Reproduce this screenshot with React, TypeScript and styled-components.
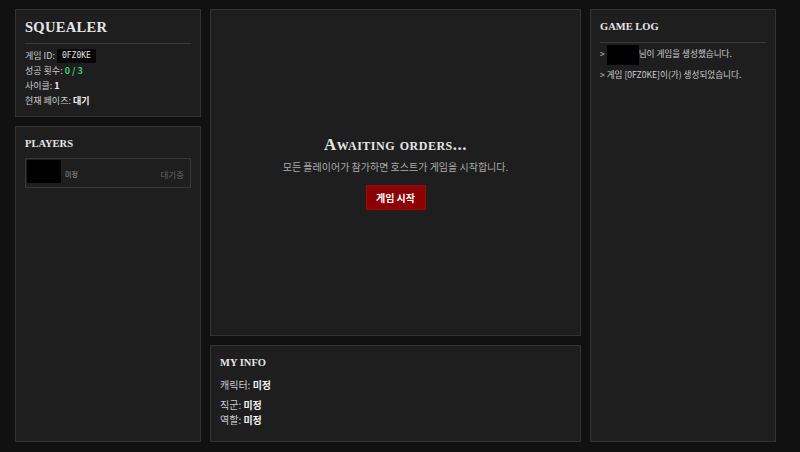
import React from "react";
import styled, { createGlobalStyle } from "styled-components";

const GlobalStyle = createGlobalStyle`
  html, body {
    margin: 0;
    padding: 0;
    background: #111111;
  }
  body {
    font-family: "Noto Sans CJK KR", "Noto Sans", sans-serif;
    color: #d0d0d0;
  }
`;

const App = () => {
  return (
    <>
      <GlobalStyle />
      <Root>
        <Column>
          <Panel>
            <Title>SQUEALER</Title>
            <Divider below={4} />
            <InfoLine>
              게임 ID:&nbsp;<Code>0FZ0KE</Code>
            </InfoLine>
            <InfoLine>
              성공 횟수:&nbsp;<Value color="#3ecf6e">0 / 3</Value>
            </InfoLine>
            <InfoLine>
              사이클:&nbsp;<Value>1</Value>
            </InfoLine>
            <InfoLine>
              현재 페이즈:&nbsp;<Value>대기</Value>
            </InfoLine>
          </Panel>
          <Panel grow>
            <SubTitle>PLAYERS</SubTitle>
            <PlayerRow>
              <Redacted width={34} height={23} />
              <PlayerName>미정</PlayerName>
              <PlayerStatus>대기중</PlayerStatus>
            </PlayerRow>
          </Panel>
        </Column>

        <Column>
          <Stage grow>
            <StageTitle>Awaiting orders...</StageTitle>
            <StageText>모든 플레이어가 참가하면 호스트가 게임을 시작합니다.</StageText>
            <StartButton>게임 시작</StartButton>
          </Stage>
          <InfoPanel>
            <SubTitle>MY INFO</SubTitle>
            <MyInfoLine gap={5}>
              캐릭터: <Value>미정</Value>
            </MyInfoLine>
            <MyInfoLine>
              직군: <Value>미정</Value>
            </MyInfoLine>
            <MyInfoLine>
              역할: <Value>미정</Value>
            </MyInfoLine>
          </InfoPanel>
        </Column>

        <Column>
          <Panel grow>
            <SubTitle>GAME LOG</SubTitle>
            <Divider below={1} />
            <LogLine>
              &gt; <Redacted width={32} height={20} />님이 게임을 생성했습니다.
            </LogLine>
            <LogLine>&gt; 게임 [0FZ0KE]이(가) 생성되었습니다.</LogLine>
          </Panel>
        </Column>
      </Root>
    </>
  );
};

export default App;

const Root = styled.div`
  display: grid;
  grid-template-columns: 186px 1fr 186px;
  gap: 9px;
  height: 452px;
  box-sizing: border-box;
  padding: 9px 24px 10px 15px;
`;

const Column = styled.div`
  display: flex;
  flex-direction: column;
  gap: 9px;
  min-height: 0;
`;

const Panel = styled.div<{ grow?: boolean }>`
  background: #1e1e1e;
  border: 1px solid #333333;
  box-sizing: border-box;
  padding: 8px 9px;
  flex: ${(p) => (p.grow ? "1" : "none")};
`;

const Stage = styled(Panel)`
  display: flex;
  flex-direction: column;
  align-items: center;
  justify-content: center;
`;

const InfoPanel = styled(Panel)`
  height: 97px;
`;

const Title = styled.div`
  font-family: "Liberation Serif", "DejaVu Serif", serif;
  font-weight: bold;
  font-size: 14.5px;
  letter-spacing: 0.3px;
  color: #e6e6e6;
  line-height: 18px;
`;

const SubTitle = styled.div`
  font-family: "Liberation Serif", "DejaVu Serif", serif;
  font-weight: bold;
  font-size: 10.5px;
  color: #e6e6e6;
  line-height: 16px;
  margin: 1px 0 6px;
`;

const Divider = styled.div<{ below: number }>`
  height: 1px;
  background: #3a3a3a;
  margin-top: 7px;
  margin-bottom: ${(p) => p.below}px;
`;

const InfoLine = styled.div`
  font-size: 9px;
  height: 15px;
  color: #cccccc;
  display: flex;
  align-items: center;
  white-space: pre;
`;

const Value = styled.span<{ color?: string }>`
  font-weight: bold;
  color: ${(p) => p.color || "#f2f2f2"};
`;

const Code = styled.span`
  font-family: "DejaVu Sans Mono", "Liberation Mono", monospace;
  font-size: 8px;
  background: #050505;
  color: #e0e0e0;
  padding: 2px 5px;
  line-height: 10px;
`;

const PlayerRow = styled.div`
  display: flex;
  align-items: center;
  border: 1px solid #383838;
  padding: 1px 6px 4px 1px;
`;

const Redacted = styled.span<{ width: number; height: number }>`
  display: inline-block;
  width: ${(p) => p.width}px;
  height: ${(p) => p.height}px;
  background: #000000;
  vertical-align: middle;
`;

const PlayerName = styled.span`
  font-size: 7px;
  color: #999999;
  margin-left: 4px;
  margin-top: 4px;
  flex: 1;
`;

const PlayerStatus = styled.span`
  font-size: 8.5px;
  color: #666666;
  margin-top: 4px;
`;

const StageTitle = styled.div`
  font-family: "Liberation Serif", "DejaVu Serif", serif;
  font-weight: bold;
  font-variant: small-caps;
  font-size: 17px;
  letter-spacing: 0.5px;
  color: #e6e6e6;
  line-height: 18px;
`;

const StageText = styled.div`
  font-size: 10px;
  color: #aaaaaa;
  margin-top: 6px;
  line-height: 14px;
`;

const StartButton = styled.button`
  margin-top: 11px;
  width: 60px;
  height: 25px;
  box-sizing: border-box;
  background: #8b0000;
  border: 1px solid #a00808;
  color: #ffffff;
  font-family: "Noto Sans CJK KR", "Noto Sans", sans-serif;
  font-weight: bold;
  font-size: 10px;
  padding: 0;
`;

const MyInfoLine = styled.div<{ gap?: number }>`
  font-size: 10px;
  line-height: 15px;
  color: #cccccc;
  margin-bottom: ${(p) => p.gap || 0}px;
`;

const LogLine = styled.div`
  font-size: 8.6px;
  color: #cccccc;
  line-height: 18px;
  white-space: nowrap;
`;
